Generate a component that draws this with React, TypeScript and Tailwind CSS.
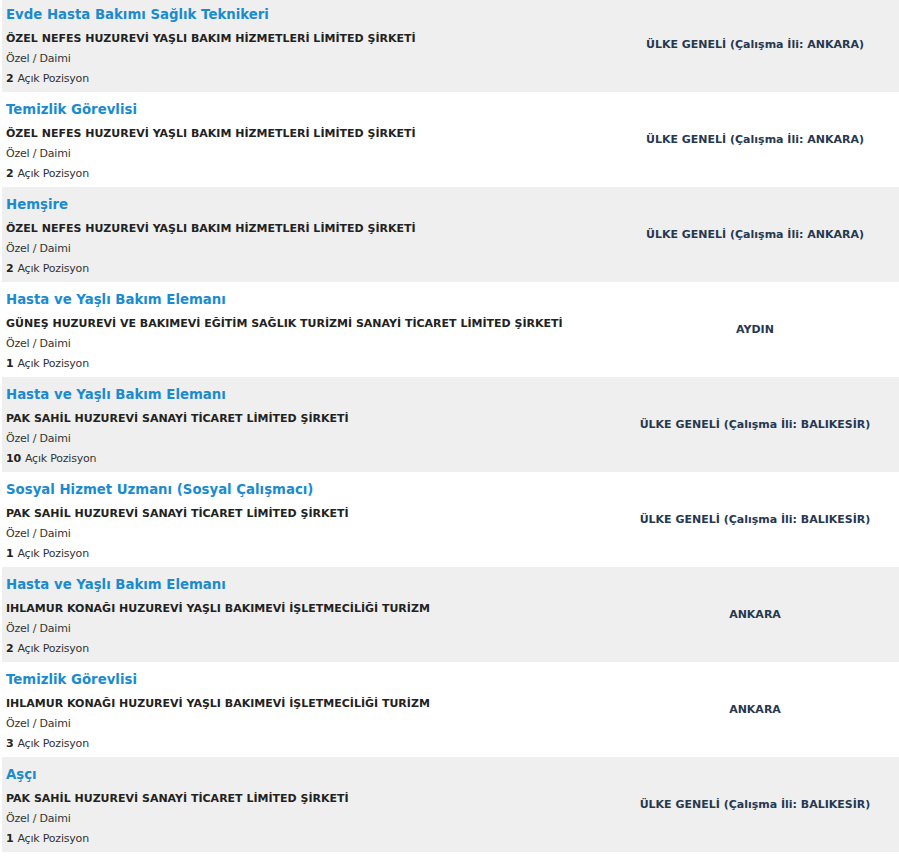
import React from "react";

type Job = {
  title: string;
  company: string;
  type: string;
  count: number;
  place: string;
};

const jobs: Job[] = [
  { title: "Evde Hasta Bakımı Sağlık Teknikeri", company: "ÖZEL NEFES HUZUREVİ YAŞLI BAKIM HİZMETLERİ LİMİTED ŞİRKETİ", type: "Özel / Daimi", count: 2, place: "ÜLKE GENELİ (Çalışma İli: ANKARA)" },
  { title: "Temizlik Görevlisi", company: "ÖZEL NEFES HUZUREVİ YAŞLI BAKIM HİZMETLERİ LİMİTED ŞİRKETİ", type: "Özel / Daimi", count: 2, place: "ÜLKE GENELİ (Çalışma İli: ANKARA)" },
  { title: "Hemşire", company: "ÖZEL NEFES HUZUREVİ YAŞLI BAKIM HİZMETLERİ LİMİTED ŞİRKETİ", type: "Özel / Daimi", count: 2, place: "ÜLKE GENELİ (Çalışma İli: ANKARA)" },
  { title: "Hasta ve Yaşlı Bakım Elemanı", company: "GÜNEŞ HUZUREVİ VE BAKIMEVİ EĞİTİM SAĞLIK TURİZMİ SANAYİ TİCARET LİMİTED ŞİRKETİ", type: "Özel / Daimi", count: 1, place: "AYDIN" },
  { title: "Hasta ve Yaşlı Bakım Elemanı", company: "PAK SAHİL HUZUREVİ SANAYİ TİCARET LİMİTED ŞİRKETİ", type: "Özel / Daimi", count: 10, place: "ÜLKE GENELİ (Çalışma İli: BALIKESİR)" },
  { title: "Sosyal Hizmet Uzmanı (Sosyal Çalışmacı)", company: "PAK SAHİL HUZUREVİ SANAYİ TİCARET LİMİTED ŞİRKETİ", type: "Özel / Daimi", count: 1, place: "ÜLKE GENELİ (Çalışma İli: BALIKESİR)" },
  { title: "Hasta ve Yaşlı Bakım Elemanı", company: "IHLAMUR KONAĞI HUZUREVİ YAŞLI BAKIMEVİ İŞLETMECİLİĞİ TURİZM", type: "Özel / Daimi", count: 2, place: "ANKARA" },
  { title: "Temizlik Görevlisi", company: "IHLAMUR KONAĞI HUZUREVİ YAŞLI BAKIMEVİ İŞLETMECİLİĞİ TURİZM", type: "Özel / Daimi", count: 3, place: "ANKARA" },
  { title: "Aşçı", company: "PAK SAHİL HUZUREVİ SANAYİ TİCARET LİMİTED ŞİRKETİ", type: "Özel / Daimi", count: 1, place: "ÜLKE GENELİ (Çalışma İli: BALIKESİR)" },
];

export default function App() {
  return (
    <div className="min-h-[856px] bg-white font-['DejaVu_Sans',sans-serif] overflow-hidden">
      <div className="-mt-[3px] pl-[2px]">
        {jobs.map((job, i) => (
          <div
            key={i}
            className={`flex h-[95px] ${i % 2 === 0 ? "bg-[#efefef]" : "bg-white"}`}
          >
            <div className="flex-1 pl-[4px] pt-[8px]">
              <div className="flex h-[20px] items-center">
                <a href="#" className="text-[13.3px] font-bold text-[#1a8bd0] leading-none">
                  {job.title}
                </a>
              </div>
              <div className="mt-[4px] flex h-[20px] items-center text-[11px] font-bold text-[#222]">
                {job.company}
              </div>
              <div className="flex h-[20px] items-center text-[11px] text-[#333] tracking-[-0.2px]">
                {job.type}
              </div>
              <div className="flex h-[20px] items-center text-[11px] text-[#333] tracking-[-0.2px]">
                <b className="mr-[4px] text-[#222]">{job.count}</b>Açık Pozisyon
              </div>
            </div>
            <div className="flex w-[288px] items-center justify-center pt-[2px] text-[11px] font-bold text-[#263850]">
              {job.place}
            </div>
          </div>
        ))}
      </div>
    </div>
  );
}
